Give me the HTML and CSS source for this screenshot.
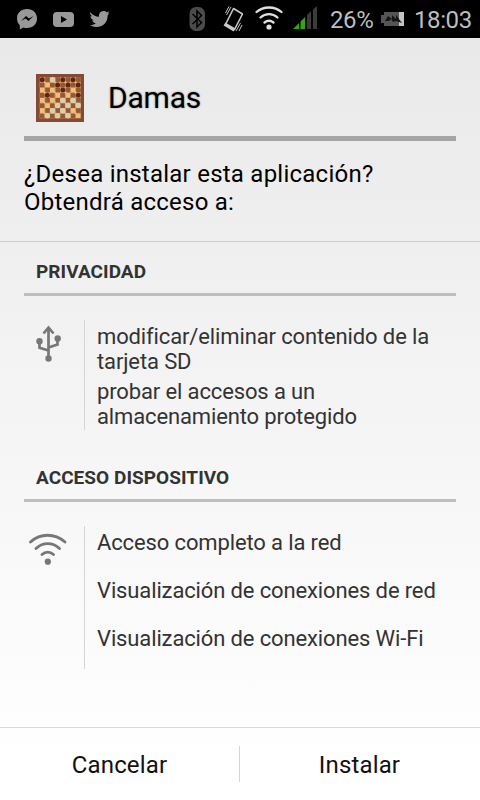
FILE: index.html
```html
<!DOCTYPE html>
<html lang="es">
<head>
<meta charset="utf-8">
<title>Damas</title>
<link rel="stylesheet" href="styles.css">
</head>
<body>
<div class="statusbar">
  <svg class="status-icons" width="330" height="38" viewBox="0 0 330 38" aria-hidden="true">
    <g fill="#999">
      <path d="M27 9c-6 0-10 4-10 9.300 0 3 1 5.200 2.800 7V29.500l3.500-2c1.200.4 2.300.5 3.700.5 6 0 10-4 10-9.500S33 9 27 9z"/>
      <path d="M21 21l5-5 3 2.500 4.500-2.500-5 5-3-2.500z" fill="#000"/>
      <rect x="53" y="12" width="21" height="15" rx="4"/>
      <path d="M61 16l6 3.500-6 3.500z" fill="#000"/>
      <path d="M90 12c3 3.500 5.500 4.500 9 4.800-.5-3 1.500-5.800 4.500-5.800 1.500 0 2.500.5 3.200 1.300l2.700-1-1.800 2.400 2-.5-2 2.300c.2 7-5 11.500-11 11.500-2.600 0-4.800-.7-6.600-2 2.400.1 4.400-.5 6-1.800-2-.2-3.200-1.300-3.800-3h1.700c-2.200-.7-3.300-2-3.400-4.200l1.800.5c-2-1.600-2.300-3-2.300-4.500z"/>
    </g>
    <rect x="189.500" y="7" width="15.500" height="24" rx="6.500" fill="#4b4b4b"/>
    <path d="M192.500 14l9 8.500-4.500 4.500V11l4.500 4.500-9 8.500" fill="none" stroke="#000" stroke-width="1.500"/>
    <g fill="none" stroke="#c8c8c8">
      <path d="M233.500 8.500l9 5.500-8 15.500-9-5z" stroke-width="1.600" stroke-linejoin="round"/>
      <path d="M224.500 24l10 6" stroke-width="3.500"/>
      <path d="M231 7l-4.500 8M229 6.500l-3.500 6.500M240.500 23l-4.500 8M242 25l-3 6" stroke-width="1"/>
    </g>
    <g fill="none" stroke="#e0e0e0" stroke-width="2.300" stroke-linecap="round">
      <path d="M256.500 12c7-6 18-6 25 0M260.500 17.500c5-4.500 12-4.500 17 0M264.500 22.500c3-2.300 6-2.300 9 0"/>
      <circle cx="269" cy="27" r="2.600" fill="#e0e0e0" stroke="none"/>
    </g>
    <path d="M293 29l6-6v6zM300.500 21.500l4.500-4.500v12h-4.500z" fill="#38a30d"/>
    <path d="M307 15l4-4v18h-4zM313 9.500l4-3.500v23h-4z" fill="#3b3b3b"/>
  </svg>
  <span class="battery-level">26%</span>
  <svg class="battery" width="24" height="16" viewBox="0 0 24 16" aria-hidden="true">
    <path d="M0 4h3V1h15v14H3v-3H0z" fill="#555"/>
    <path d="M18 1h5v14h-5z" fill="#c4c4c4"/>
    <path d="M4 10l3-5 4 3V4l4 4V4l6 8-6-2-3 1-2-3-2 2z" fill="#151515"/>
  </svg>
  <span class="clock">18:03</span>
</div>
<header class="app-header">
  <svg class="app-icon" width="48" height="48" viewBox="0 0 48 48" aria-hidden="true">
    <defs>
      <pattern id="squares" x="3.600" y="3.200" width="10.300" height="10.300" patternUnits="userSpaceOnUse">
        <rect width="10.300" height="10.300" fill="#935a32"/>
        <rect width="5.300" height="5.300" fill="#f5bd7c"/>
        <rect x="5.100" y="5.100" width="5.300" height="5.300" fill="#f5bd7c"/>
        <path d="M4.500 5.100h1.300M5.150 4.500v1.300" stroke="#eee0c8" stroke-width=".7"/>
      </pattern>
    </defs>
    <rect width="48" height="48" fill="#854a35"/>
    <rect x="3.600" y="3.200" width="41.200" height="41.200" fill="url(#squares)"/>
    <g fill="#5d2414">
      <circle cx="6.200" cy="5.800" r="2.500"/><circle cx="26.800" cy="5.800" r="2.500"/><circle cx="37" cy="5.800" r="2.500"/>
      <circle cx="21.600" cy="11" r="2.500"/><circle cx="32" cy="11" r="2.500"/><circle cx="42.200" cy="11" r="2.500"/>
      <circle cx="26.800" cy="16.100" r="2.500"/><circle cx="11.300" cy="21.200" r="2.500"/><circle cx="42.200" cy="21.200" r="2.500"/>
    </g>
    <g fill="#d7cfb4">
      <circle cx="16.500" cy="5.800" r="2.700"/><circle cx="26.800" cy="26.400" r="2.700"/><circle cx="37" cy="26.400" r="2.700"/>
      <circle cx="21.600" cy="31.500" r="2.700"/><circle cx="32" cy="31.500" r="2.700"/><circle cx="42.200" cy="31.500" r="2.700"/>
      <circle cx="16.500" cy="36.700" r="2.700"/><circle cx="26.800" cy="36.700" r="2.700"/>
      <circle cx="11.300" cy="41.800" r="2.700"/><circle cx="21.600" cy="41.800" r="2.700"/><circle cx="32" cy="41.800" r="2.700"/>
    </g>
  </svg>
  <h1>Damas</h1>
</header>
<p class="question">¿Desea instalar esta aplicación?<br>Obtendrá acceso a:</p>
<main>
  <section>
    <h2>PRIVACIDAD</h2>
    <div class="group">
      <svg class="group-icon" width="48" height="48" viewBox="0 0 48 48" aria-hidden="true">
        <g fill="none" stroke="#777" stroke-width="2.700">
          <path d="M24.500 37V8M19.500 13.500l5-6 5 6M15.500 21v6.800l9 2.700M33.500 18v6.500l-9 3"/>
        </g>
        <g fill="#777"><circle cx="24.500" cy="38.500" r="3.200"/><circle cx="15.500" cy="21.300" r="3.200"/><circle cx="33.700" cy="18.500" r="3.200"/></g>
      </svg>
      <div class="permissions privacy">
        <p>modificar/eliminar contenido de la<br>tarjeta SD</p>
        <p>probar el accesos a un<br>almacenamiento protegido</p>
      </div>
    </div>
  </section>
  <section class="device">
    <h2>ACCESO DISPOSITIVO</h2>
    <div class="group">
      <svg class="group-icon" width="48" height="48" viewBox="0 0 48 48" aria-hidden="true">
        <path d="M6.500 16c10-9 24-9 34.500 0M12 22.500c7-6.500 16.500-6.500 23.500 0M18 28.500c3.500-3 8-3 11.500 0" fill="none" stroke="#777" stroke-width="2.900" stroke-linecap="round"/>
        <circle cx="23.800" cy="35.700" r="3.100" fill="#777"/>
      </svg>
      <div class="permissions network">
        <p>Acceso completo a la red</p>
        <p>Visualización de conexiones de red</p>
        <p>Visualización de conexiones Wi-Fi</p>
      </div>
    </div>
  </section>
</main>
<footer class="actions">
  <button type="button">Cancelar</button>
  <span class="separator"></span>
  <button type="button">Instalar</button>
</footer>
</body>
</html>
```
FILE: styles.css
```css
* { box-sizing: border-box; }
body {
  margin: 0;
  width: 480px;
  height: 800px;
  display: flex;
  flex-direction: column;
  overflow: hidden;
  font-family: Roboto, sans-serif;
  color: #000;
  background: linear-gradient(#e9e9e9 38px, #fff 760px);
}
h1, h2, p { margin: 0; font-weight: 400; }
svg { display: block; flex: none; }
.statusbar {
  height: 38px;
  flex: none;
  display: flex;
  align-items: center;
  background: #000;
  color: #bebebe;
  font-size: 24px;
  white-space: nowrap;
}
.battery-level { width: 51px; padding-top: 2px; letter-spacing: -0.4px; }
.clock { padding: 2px 0 0 9px; letter-spacing: -0.4px; }
.app-header {
  height: 103px;
  flex: none;
  margin: 0 24px;
  padding: 19px 12px 0;
  display: flex;
  align-items: center;
  gap: 24px;
  border-bottom: 5px solid #a5a5a5;
}
.app-icon { margin-top: 3px; }
.app-header h1 { padding-top: 2px; font-size: 30px; letter-spacing: -0.2px; text-shadow: 0 0 2px #888; }
.question {
  height: 101px;
  flex: none;
  padding: 19px 24px 0;
  font-size: 24px;
  line-height: 28px;
  letter-spacing: 0.24px;
  border-bottom: 1px solid #cecece;
}
main { flex: 1; padding: 0 24px; }
section { height: 206px; }
h2 {
  height: 54px;
  padding: 18px 12px 0;
  font-size: 19px;
  line-height: 24px;
  font-weight: 700;
  letter-spacing: 0.05px;
  color: #333;
  border-bottom: 3px solid #bebebe;
}
.group { display: flex; padding-top: 24px; }
.group-icon { width: 48px; }
.permissions {
  margin-left: 12px;
  padding-left: 12px;
  border-left: 1px solid #d5d5d5;
  color: #333;
  font-size: 22px;
  line-height: 25px;
  letter-spacing: -0.13px;
  white-space: nowrap;
}
.privacy { height: 110px; padding-top: 4px; }
.privacy p + p { margin-top: 5px; }
.network { height: 143px; padding-top: 4px; }
.network p + p { margin-top: 23px; }
.actions {
  height: 73px;
  flex: none;
  display: flex;
  align-items: center;
  padding-right: 1px;
  border-top: 1px solid #d9d9d9;
}
.actions button {
  flex: 1;
  padding: 1px 0 0;
  border: 0;
  background: none;
  color: #111;
  font: 24px Roboto, sans-serif;
  letter-spacing: 0.15px;
}
.separator { width: 1px; height: 36px; background: #d5d5d5; }
```
